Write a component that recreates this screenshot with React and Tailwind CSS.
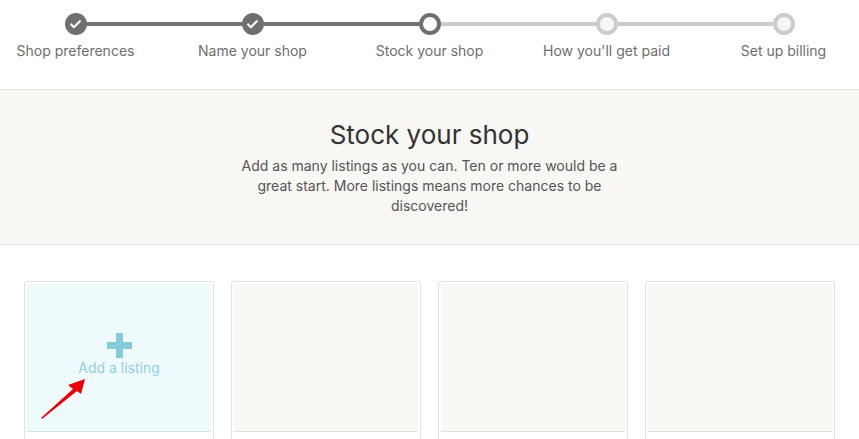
import { Check } from "lucide-react";

const steps = [
    "Shop preferences",
    "Name your shop",
    "Stock your shop",
    "How you'll get paid",
    "Set up billing",
];
const current = 2;

const Step = ({ label, index }) => {
    const done = index < current;
    const active = index === current;
    const leftDark = index <= current;
    const rightDark = index < current;
    return (
        <div className="w-[177px] shrink-0 flex flex-col items-center">
            <div className="w-full flex items-center">
                <div
                    className={`flex-1 h-[4px] ${
                        index === 0 ? "bg-transparent" : leftDark ? "bg-[#717171]" : "bg-[#cccccc]"
                    }`}
                />
                {done && (
                    <div className="w-[22px] h-[22px] rounded-full bg-[#6f6f6f] flex items-center justify-center">
                        <Check className="w-[13px] h-[13px] text-white" strokeWidth={4} />
                    </div>
                )}
                {active && (
                    <div className="w-[22px] h-[22px] rounded-full border-[4px] border-[#6f6f6f] bg-white" />
                )}
                {!done && !active && (
                    <div className="w-[22px] h-[22px] rounded-full border-[4px] border-[#cccccc] bg-[#f7f7f5]" />
                )}
                <div
                    className={`flex-1 h-[4px] ${
                        index === steps.length - 1
                            ? "bg-transparent"
                            : rightDark
                            ? "bg-[#717171]"
                            : "bg-[#cccccc]"
                    }`}
                />
            </div>
            <p className="mt-[6px] text-[14px] leading-[20px] text-[#6e6e6e] whitespace-nowrap">
                {label}
            </p>
        </div>
    );
};

const Card = ({ first }) => (
    <div className="h-[170px] border border-[#e1e1e1] rounded-[3px] p-[2px] pb-0 bg-white relative">
        <div
            className={`h-[148px] flex flex-col items-center justify-center border-b ${
                first ? "bg-[#effafc] border-[#cfe6ec]" : "bg-[#f9f8f4] border-[#e1e1e1]"
            }`}
        >
            {first && (
                <>
                    <div className="w-[25px] h-[25px] flex items-center justify-center relative mt-[-4px]">
                        <div className="w-[25px] h-[7px] bg-[#86cbdc]" />
                        <div className="absolute w-[7px] h-[25px] bg-[#86cbdc]" />
                    </div>
                    <p className="mt-0 text-[14px] leading-[20px] text-[#8fd0e0]">
                        Add a listing
                    </p>
                </>
            )}
        </div>
        {first && (
            <svg
                className="absolute left-[14px] top-[93px]"
                width="50"
                height="48"
                viewBox="0 0 50 48"
            >
                <polygon
                    points="2,43 34,14 29,10 46,4 42,19 38,16 3,44"
                    fill="#e8000b"
                />
            </svg>
        )}
    </div>
);

const App = () => {
    return (
        <div
            className="w-[859px] h-[439px] overflow-hidden bg-white"
            style={{ fontFamily: "Inter, 'Noto Sans', sans-serif" }}
        >
            <div className="flex justify-center pt-[13px] pb-[28px]">
                {steps.map((label, index) => (
                    <Step key={index} label={label} index={index} />
                ))}
            </div>

            <div className="bg-[#f8f7f3] border-y border-[#e6e4de] pt-[29px] pb-[28px] flex flex-col items-center">
                <h1 className="text-[26px] leading-[32px] text-[#333333] font-normal">
                    Stock your shop
                </h1>
                <p className="mt-[5px] w-[390px] text-center text-[14px] leading-[20px] text-[#555555]">
                    Add as many listings as you can. Ten or more would be a great start. More listings means more chances to be discovered!
                </p>
            </div>

            <div className="grid grid-cols-4 gap-[17px] px-[24px] pt-[36px]">
                <Card first />
                <Card />
                <Card />
                <Card />
            </div>
        </div>
    );
};

export default App;
